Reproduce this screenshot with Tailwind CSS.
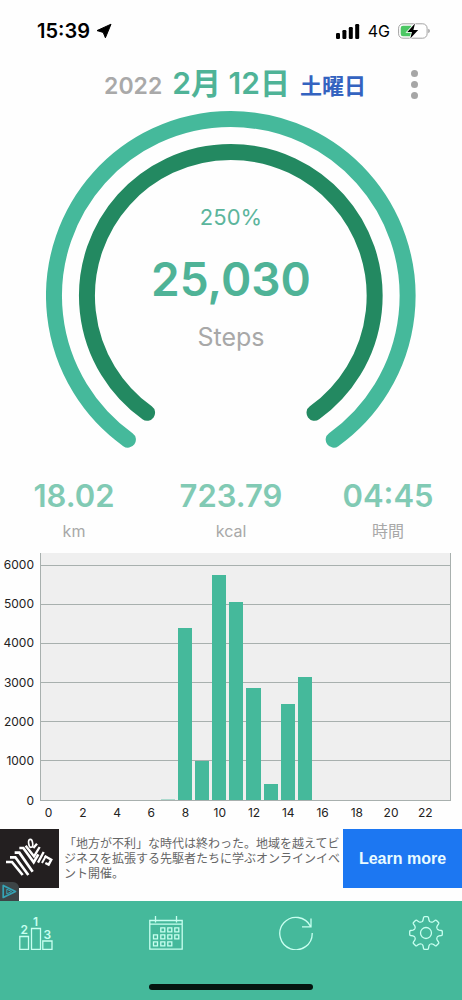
<!DOCTYPE html>
<html lang="ja">
<head>
<meta charset="utf-8">
<meta name="viewport" content="width=device-width, initial-scale=1">
<title>歩数計</title>
<script src="https://cdn.jsdelivr.net/npm/@tailwindcss/browser@4"></script>
</head>
<body class="min-h-screen flex flex-col bg-[#fefefe] font-['Inter','Noto_Sans_CJK_JP',sans-serif]">

<!-- Status bar -->
<div class="h-[62px] flex items-center justify-between pl-[37px] pr-8">
  <div class="flex items-center gap-1.5 text-black">
    <span class="text-xl leading-6 font-semibold">15:39</span>
    <svg class="w-4 h-4" viewBox="0 0 16 16" fill="currentColor" stroke="currentColor" stroke-linejoin="round" aria-label="位置情報"><path d="M15 1.200 9.400 14.800 7.200 9.400 1 7.600Z"/></svg>
  </div>
  <div class="flex items-center gap-2 text-black">
    <svg class="w-6 h-4" viewBox="0 0 24 16" fill="currentColor" aria-label="電波"><rect x="0" y="10" width="4" height="6" rx="1.2"/><rect x="6.4" y="7" width="4" height="9" rx="1.2"/><rect x="12.8" y="4" width="4" height="12" rx="1.2"/><rect x="19.2" y="1" width="4" height="15" rx="1.2"/></svg>
    <span class="text-base leading-6">4G</span>
    <svg class="w-8 h-4" viewBox="0 0 32 16" aria-label="バッテリー"><rect x=".6" y=".8" width="28.5" height="14.4" rx="4.4" fill="#fff" stroke="#a3a3a3"/><path d="M5 2.800h8.500v10.400H5a2.300 2.300 0 0 1-2.300-2.300V5.100A2.300 2.300 0 0 1 5 2.800Z" fill="#4cc764"/><path d="M30.300 5.800v4.400q1.500-.6 1.500-2.200t-1.500-2.200Z" fill="#999"/><path d="M17 .6 9.300 9h4.600L12.300 15.600 20.200 7h-4.800Z" fill="#000" stroke="#fff" stroke-width="1.600" paint-order="stroke"/></svg>
  </div>
</div>

<!-- Date heading -->
<header class="h-[45px] mb-1 grid grid-cols-[1fr_auto_1fr] items-center">
  <h1 class="col-start-2 ml-2 flex items-baseline gap-2.5 whitespace-nowrap leading-10 font-semibold">
    <span class="text-[23px] text-[#a9a9a9]">2022</span>
    <span class="text-[30px] text-[#4fb397]">2月 12日</span>
    <span class="text-[22px] text-[#3463c0]">土曜日</span>
  </h1>
  <button type="button" aria-label="メニュー" class="justify-self-end mr-10 w-4 flex flex-col items-center gap-1">
    <span class="size-[7px] rounded-full bg-[#a6a6a6]"></span>
    <span class="size-[7px] rounded-full bg-[#a6a6a6]"></span>
    <span class="size-[7px] rounded-full bg-[#a6a6a6]"></span>
  </button>
</header>

<main class="flex-1 flex flex-col">
  <!-- Progress gauge -->
  <section class="grid justify-items-center" aria-label="歩数">
    <svg class="col-start-1 row-start-1 w-4/5" viewBox="0 0 370 338" fill="none" stroke-width="16" stroke-linecap="round" aria-hidden="true">
      <path d="M82 329A177 177 0 1 1 288 329" stroke="#45b99b"/>
      <path d="M101.200 302.100A144 144 0 1 1 268.800 302.100" stroke="#238961"/>
    </svg>
    <div class="col-start-1 row-start-1 pt-[90px] flex flex-col items-center">
      <p class="text-[22px] leading-8 text-[#5bb59c]">250%</p>
      <p class="mt-4 text-[46px] leading-[60px] font-semibold text-[#4fb397]">25,030</p>
      <p class="mt-2.5 text-[25px] leading-9 text-[#a8a8a8]">Steps</p>
    </div>
  </section>

  <!-- Totals -->
  <dl class="mt-[27px] grid grid-cols-[148px_1fr_148px] text-center">
    <div class="flex flex-col-reverse"><dt class="mt-[3px] text-base leading-6 text-[#a8a8a8]">km</dt><dd class="text-[31px] leading-10 font-semibold text-[#81cab4]">18.02</dd></div>
    <div class="flex flex-col-reverse"><dt class="mt-[3px] text-base leading-6 text-[#a8a8a8]">kcal</dt><dd class="text-[31px] leading-10 font-semibold text-[#81cab4]">723.79</dd></div>
    <div class="flex flex-col-reverse"><dt class="mt-[3px] text-base leading-6 text-[#a8a8a8]">時間</dt><dd class="text-[31px] leading-10 font-semibold text-[#81cab4]">04:45</dd></div>
  </dl>

  <!-- Hourly chart -->
  <section class="mt-2.5 pr-[11px] grid grid-cols-[34px_1fr] gap-x-1.5 text-xs leading-4 text-[#222]" aria-label="時間別の歩数">
    <div class="pt-1 -mb-2 flex flex-col justify-between text-right">
      <span>6000</span><span>5000</span><span>4000</span><span>3000</span><span>2000</span><span>1000</span><span>0</span>
    </div>
    <div class="grid h-[248px] bg-[#efefef] border-x border-b border-[#a8b0ae]">
      <div class="col-start-1 row-start-1 pt-3 flex flex-col">
        <div class="flex-1 border-t border-[#a8b0ae]"></div>
        <div class="flex-1 border-t border-[#a8b0ae]"></div>
        <div class="flex-1 border-t border-[#a8b0ae]"></div>
        <div class="flex-1 border-t border-[#a8b0ae]"></div>
        <div class="flex-1 border-t border-[#a8b0ae]"></div>
        <div class="flex-1 border-t border-[#a8b0ae]"></div>
      </div>
      <div class="col-start-1 row-start-1 grid grid-cols-24 items-end">
        <div class="col-start-8 ml-px mr-0.5 bg-[#45b99b]/40 min-h-px" style="height:0.2%"></div>
        <div class="ml-px mr-0.5 bg-[#45b99b]" style="height:69.300%"></div>
        <div class="ml-px mr-0.5 bg-[#45b99b]" style="height:15.700%"></div>
        <div class="ml-px mr-0.5 bg-[#45b99b]" style="height:91%"></div>
        <div class="ml-px mr-0.5 bg-[#45b99b]" style="height:80%"></div>
        <div class="ml-px mr-0.5 bg-[#45b99b]" style="height:45%"></div>
        <div class="ml-px mr-0.5 bg-[#45b99b]" style="height:6.200%"></div>
        <div class="ml-px mr-0.5 bg-[#45b99b]" style="height:38.700%"></div>
        <div class="ml-px mr-0.5 bg-[#45b99b]" style="height:49.800%"></div>
      </div>
    </div>
    <div class="col-start-2 mt-1 grid grid-cols-12 pb-2">
      <span class="w-1/2 text-center">0</span><span class="w-1/2 text-center">2</span><span class="w-1/2 text-center">4</span><span class="w-1/2 text-center">6</span><span class="w-1/2 text-center">8</span><span class="w-1/2 text-center">10</span><span class="w-1/2 text-center">12</span><span class="w-1/2 text-center">14</span><span class="w-1/2 text-center">16</span><span class="w-1/2 text-center">18</span><span class="w-1/2 text-center">20</span><span class="w-1/2 text-center">22</span>
    </div>
  </section>
</main>

<!-- Banner -->
<aside class="relative h-[72px] flex items-start" aria-label="広告">
  <svg class="size-[59px] shrink-0 bg-[#231f20]" viewBox="0 0 177 177" fill="none" stroke="#fff" stroke-width="8" stroke-linejoin="miter" aria-hidden="true">
    <path d="M18 99H36L68 138"/>
    <path d="M30 85H46L85 138"/>
    <path d="M44 71H58L98 128"/>
    <path d="M58 57H70L101 100L115 76"/>
    <path d="M77 50L102 82L119 54" stroke-width="7"/>
    <path d="M100 57L111 44" stroke-width="7"/>
    <path d="M114 101L131 69" stroke-width="7"/>
    <path d="M126 102L138 80" stroke-width="6"/>
    <path d="M134 81L154 92L146 107L136 102" stroke-width="7"/>
    <ellipse cx="92" cy="43" rx="6" ry="12" stroke-width="5" transform="rotate(-8 92 43)"/>
  </svg>
  <p class="flex-1 pl-[5px] pt-1.5 text-xs leading-[15px] whitespace-nowrap text-[#666] font-['Noto_Sans_CJK_JP',sans-serif]">「地方が不利」な時代は終わった。地域を越えてビ<br>ジネスを拡張する先駆者たちに学ぶオンラインイベ<br>ント開催。</p>
  <a href="#" class="w-[119px] h-[59px] shrink-0 flex items-center justify-center bg-[#1c77f2] text-[#e9fbff] text-base font-bold font-['Liberation_Sans',sans-serif]">Learn more</a>
  <a href="#" aria-label="広告について" class="absolute left-0 bottom-0 w-[19px] h-[19px] rounded-tr-md bg-[#3d4547]">
    <svg viewBox="0 0 19 19" fill="none" stroke="#35a3b5" stroke-linejoin="round"><path d="M3.200 3.500V15.500L15.500 9.500Z" stroke-width="1.700"/><path d="M6.800 7.200V12L11.500 9.500Z" stroke-width="1"/></svg>
  </a>
</aside>

<!-- Tab bar -->
<footer class="bg-[#45b99b] pt-[15px] pb-2.5 text-[#c8fff0]">
  <nav class="px-[19px] flex justify-between">
    <button type="button" aria-label="ランキング" class="size-[34px]">
      <svg class="overflow-visible" viewBox="0 0 34 34" fill="none" stroke="currentColor" stroke-width="1.300"><path d="M.8 20.500H9.500V33.300H.8ZM12.500 12.500H21.500V33.300H12.500ZM23.800 25H33V33.300H23.800Z"/><g fill="currentColor" stroke="none" font-family="Inter, sans-serif" font-size="12" font-weight="600" text-anchor="middle"><text x="5.300" y="18">2</text><text x="16.500" y="10">1</text><text x="28.300" y="23">3</text></g></svg>
    </button>
    <button type="button" aria-label="カレンダー" class="size-[34px]">
      <svg viewBox="0 0 34 34" fill="none" stroke="currentColor" stroke-width="1.300"><path d="M.8 4.500H33.200V33.200H.8ZM.8 8.200H33.200M6.500 0V6.500M27.500 0V6.500"/><path d="M11.800 11.800h4v4h-4zM18.800 11.800h4v4h-4zM25.800 11.800h4v4h-4zM4.500 18.800h4v4h-4zM11.800 18.800h4v4h-4zM18.800 18.800h4v4h-4zM25.800 18.800h4v4h-4zM4.500 25.800h4v4h-4zM11.800 25.800h4v4h-4zM18.800 25.800h4v4h-4z"/></svg>
    </button>
    <button type="button" aria-label="更新" class="size-[34px]">
      <svg viewBox="0 0 34 34" fill="none" stroke="currentColor" stroke-width="1.300"><path d="M33.200 17A16.200 16.200 0 1 1 31.500 10.300M32 2.500V10.800H23"/></svg>
    </button>
    <button type="button" aria-label="設定" class="size-[34px]">
      <svg viewBox="-17 -17 34 34" fill="none" stroke="currentColor" stroke-width="1.300">
        <circle r="5.500"/>
        <path id="tooth" d="M-4.550-11Q-3.200-11.600-2.900-13L-2.500-15.300Q-2.300-16.300-1.400-16.300H1.400Q2.300-16.300 2.500-15.300L2.900-13Q3.200-11.600 4.550-11"/>
        <use href="#tooth" transform="rotate(45)"/><use href="#tooth" transform="rotate(90)"/><use href="#tooth" transform="rotate(135)"/><use href="#tooth" transform="rotate(180)"/><use href="#tooth" transform="rotate(225)"/><use href="#tooth" transform="rotate(270)"/><use href="#tooth" transform="rotate(315)"/>
      </svg>
    </button>
  </nav>
  <div class="mx-auto mt-[34px] h-1.5 w-[164px] rounded-full bg-[#04140f]"></div>
</footer>
</body>
</html>
